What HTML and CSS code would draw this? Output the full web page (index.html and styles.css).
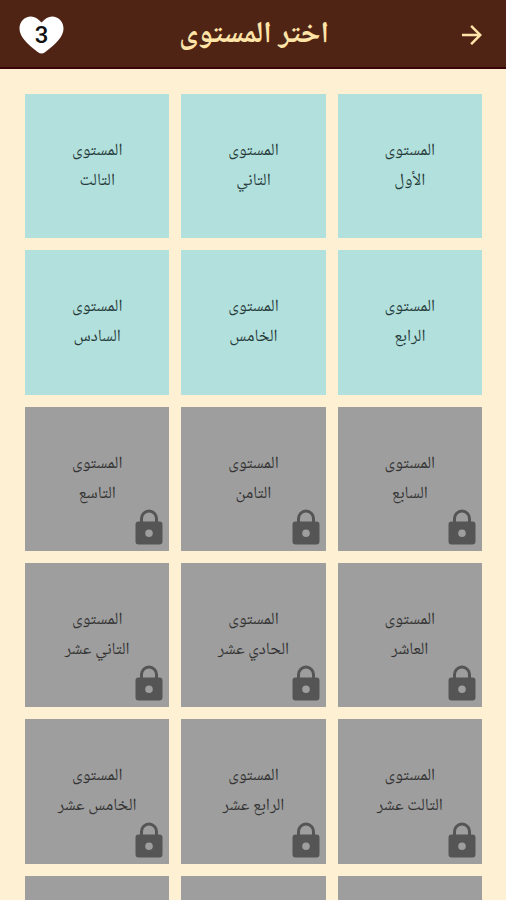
FILE: index.html
```html
<!DOCTYPE html>
<html lang="ar" dir="rtl">
<head>
  <meta charset="UTF-8">
  <meta name="viewport" content="width=device-width, initial-scale=1.0">
  <title>اختر المستوى</title>
  <link rel="stylesheet" href="styles.css">
</head>
<body>
  <svg class="sprite" aria-hidden="true">
    <symbol id="lock" viewBox="0 0 28 36">
      <path fill-rule="evenodd" d="M5 12.500V9.500a9 9 0 0 1 18 0v3h1.500a3 3 0 0 1 3 3v17a3 3 0 0 1-3 3h-21a3 3 0 0 1-3-3v-17a3 3 0 0 1 3-3zM8 12.500h12V9.500a6 6 0 0 0-12 0zM14 20.500a3.800 3.800 0 1 0 0 7.600a3.800 3.800 0 1 0 0-7.600z"/>
    </symbol>
  </svg>

  <header class="app-bar">
    <button class="back-btn" aria-label="رجوع">
      <svg viewBox="4 4 16 16" width="20" height="20"><path d="M12 4l-1.410 1.410L16.170 11H4v2h12.170l-5.580 5.590L12 20l8-8z" fill="currentColor"/></svg>
    </button>
    <h1>اختر المستوى</h1>
    <div class="lives">
      <svg viewBox="0 0 45 38" width="45" height="38"><path d="M22.500 6.500C19 2.500 15.500 0.500 12 0.500 5.500 0.500 0.500 5.500 0.500 12.500c0 8 7 15 18.500 23.700 2.500 1.800 4.500 1.800 7 0C37.500 27.500 44.500 20.500 44.500 12.500 44.500 5.500 39.500 0.500 33 0.500c-3.500 0-7 2-10.500 6z" fill="#fff"/></svg>
      <span class="lives-count">3</span>
    </div>
  </header>

  <main class="levels">
    <button class="level">المستوى<br>الأول</button>
    <button class="level">المستوى<br>التاني</button>
    <button class="level">المستوى<br>التالت</button>
    <button class="level">المستوى<br>الرابع</button>
    <button class="level">المستوى<br>الخامس</button>
    <button class="level">المستوى<br>السادس</button>
    <button class="level locked">المستوى<br>السابع<svg class="lock"><use href="#lock"/></svg></button>
    <button class="level locked">المستوى<br>التامن<svg class="lock"><use href="#lock"/></svg></button>
    <button class="level locked">المستوى<br>التاسع<svg class="lock"><use href="#lock"/></svg></button>
    <button class="level locked">المستوى<br>العاشر<svg class="lock"><use href="#lock"/></svg></button>
    <button class="level locked">المستوى<br>الحادي عشر<svg class="lock"><use href="#lock"/></svg></button>
    <button class="level locked">المستوى<br>التاني عشر<svg class="lock"><use href="#lock"/></svg></button>
    <button class="level locked">المستوى<br>التالت عشر<svg class="lock"><use href="#lock"/></svg></button>
    <button class="level locked">المستوى<br>الرابع عشر<svg class="lock"><use href="#lock"/></svg></button>
    <button class="level locked">المستوى<br>الخامس عشر<svg class="lock"><use href="#lock"/></svg></button>
    <button class="level locked" aria-label="المستوى السادس عشر"></button>
    <button class="level locked" aria-label="المستوى السابع عشر"></button>
    <button class="level locked" aria-label="المستوى التامن عشر"></button>
  </main>
</body>
</html>
```
FILE: styles.css
```css
* {
  box-sizing: border-box;
}

body {
  margin: 0;
  height: 100vh;
  display: flex;
  flex-direction: column;
  background-color: #fef0d3;
  font-family: "Noto Naskh Arabic", "Noto Sans Arabic", serif;
}

button {
  border: none;
  padding: 0;
  font-family: inherit;
  cursor: pointer;
}

.sprite {
  position: absolute;
  width: 0;
  height: 0;
}

.app-bar {
  flex: none;
  display: flex;
  align-items: center;
  justify-content: space-between;
  height: 69px;
  padding: 2px 24px 0 19px;
  background-color: #502415;
  border-bottom: 2px solid #3a0508;
  color: #ffe4a8;
}

.app-bar h1 {
  flex: 1;
  margin: 0;
  padding: 2px 18px 0 0;
  font-size: 30px;
  line-height: 40px;
  font-weight: 700;
  text-align: center;
}

.back-btn {
  display: flex;
  background: none;
  color: inherit;
}

.lives {
  display: grid;
  place-items: center;
}

.lives svg,
.lives-count {
  grid-area: 1 / 1;
}

.lives-count {
  color: #111;
  font-family: Roboto, sans-serif;
  font-size: 24px;
  font-weight: 500;
  line-height: 28px;
}

.levels {
  flex: 1;
  min-height: 0;
  overflow-y: auto;
  scrollbar-width: none;
  display: grid;
  grid-template-columns: repeat(3, 1fr);
  align-content: start;
  gap: 12px;
  padding: 25px 24px 25px 25px;
}

.level {
  position: relative;
  aspect-ratio: 1;
  padding-top: 2px;
  background-color: #b2e0dc;
  color: #263b3b;
  font-size: 17px;
  line-height: 30px;
}

.level.locked {
  background-color: #9e9e9e;
  color: #333;
}

.lock {
  position: absolute;
  right: 6px;
  bottom: 6px;
  width: 28px;
  height: 36px;
  fill: #555;
}
```
